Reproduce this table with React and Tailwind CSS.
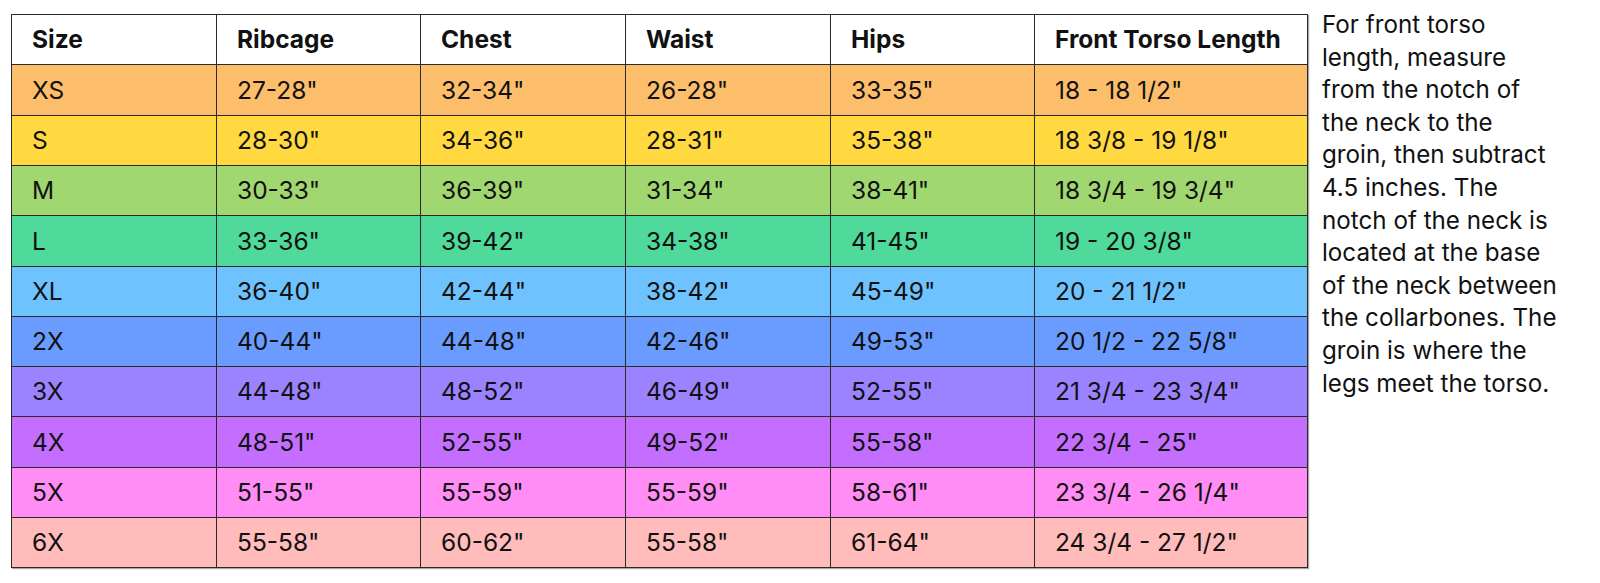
import React from "react";

const rows = [
  ["XS", "27-28\"", "32-34\"", "26-28\"", "33-35\"", "18 - 18 1/2\"", "bg-[#fdbe6c]"],
  ["S", "28-30\"", "34-36\"", "28-31\"", "35-38\"", "18 3/8 - 19 1/8\"", "bg-[#ffd93f]"],
  ["M", "30-33\"", "36-39\"", "31-34\"", "38-41\"", "18 3/4 - 19 3/4\"", "bg-[#a1d770]"],
  ["L", "33-36\"", "39-42\"", "34-38\"", "41-45\"", "19 - 20 3/8\"", "bg-[#4fd99a]"],
  ["XL", "36-40\"", "42-44\"", "38-42\"", "45-49\"", "20 - 21 1/2\"", "bg-[#6ec3ff]"],
  ["2X", "40-44\"", "44-48\"", "42-46\"", "49-53\"", "20 1/2 - 22 5/8\"", "bg-[#6a9cff]"],
  ["3X", "44-48\"", "48-52\"", "46-49\"", "52-55\"", "21 3/4 - 23 3/4\"", "bg-[#9b83ff]"],
  ["4X", "48-51\"", "52-55\"", "49-52\"", "55-58\"", "22 3/4 - 25\"", "bg-[#c46eff]"],
  ["5X", "51-55\"", "55-59\"", "55-59\"", "58-61\"", "23 3/4 - 26 1/4\"", "bg-[#ff8df5]"],
  ["6X", "55-58\"", "60-62\"", "55-58\"", "61-64\"", "24 3/4 - 27 1/2\"", "bg-[#ffbcbb]"],
];

const headers = ["Size", "Ribcage", "Chest", "Waist", "Hips", "Front Torso Length"];
const widths = ["w-[205px]", "w-[204px]", "w-[205px]", "w-[205px]", "w-[204px]", "w-[273px]"];

export default function App() {
  return (
    <div
      className="flex items-start bg-white text-[#111111] w-[1600px] h-[583px] pt-[14px] pl-[11px]"
      style={{ fontFamily: "Inter, 'Noto Sans', sans-serif" }}
    >
      <table className="border-collapse border border-[#2a2a2a] text-[24.5px] table-fixed w-[1296px] shadow-[1px_1px_1px_rgba(0,0,0,0.35)]">
        <thead>
          <tr className="h-[50.4px] bg-white">
            {headers.map((h, i) => (
              <th
                key={h}
                className={`${widths[i]} border border-[#2a2a2a] pl-5 text-left font-bold p-0`}
              >
                {h}
              </th>
            ))}
          </tr>
        </thead>
        <tbody>
          {rows.map((r) => (
            <tr key={r[0]} className={`h-[50.3px] ${r[6]}`}>
              {r.slice(0, 6).map((c, i) => (
                <td key={i} className="border border-[#2a2a2a] pl-5 p-0 font-normal">
                  {c}
                </td>
              ))}
            </tr>
          ))}
        </tbody>
      </table>
      <p className="ml-[14px] w-[240px] text-[24.2px] leading-[32.6px] -mt-[5px]">
        For front torso length, measure from the notch of the neck to the groin, then subtract 4.5 inches. The notch of the neck is located at the base of the neck between the collarbones. The groin is where the legs meet the torso.
      </p>
    </div>
  );
}
